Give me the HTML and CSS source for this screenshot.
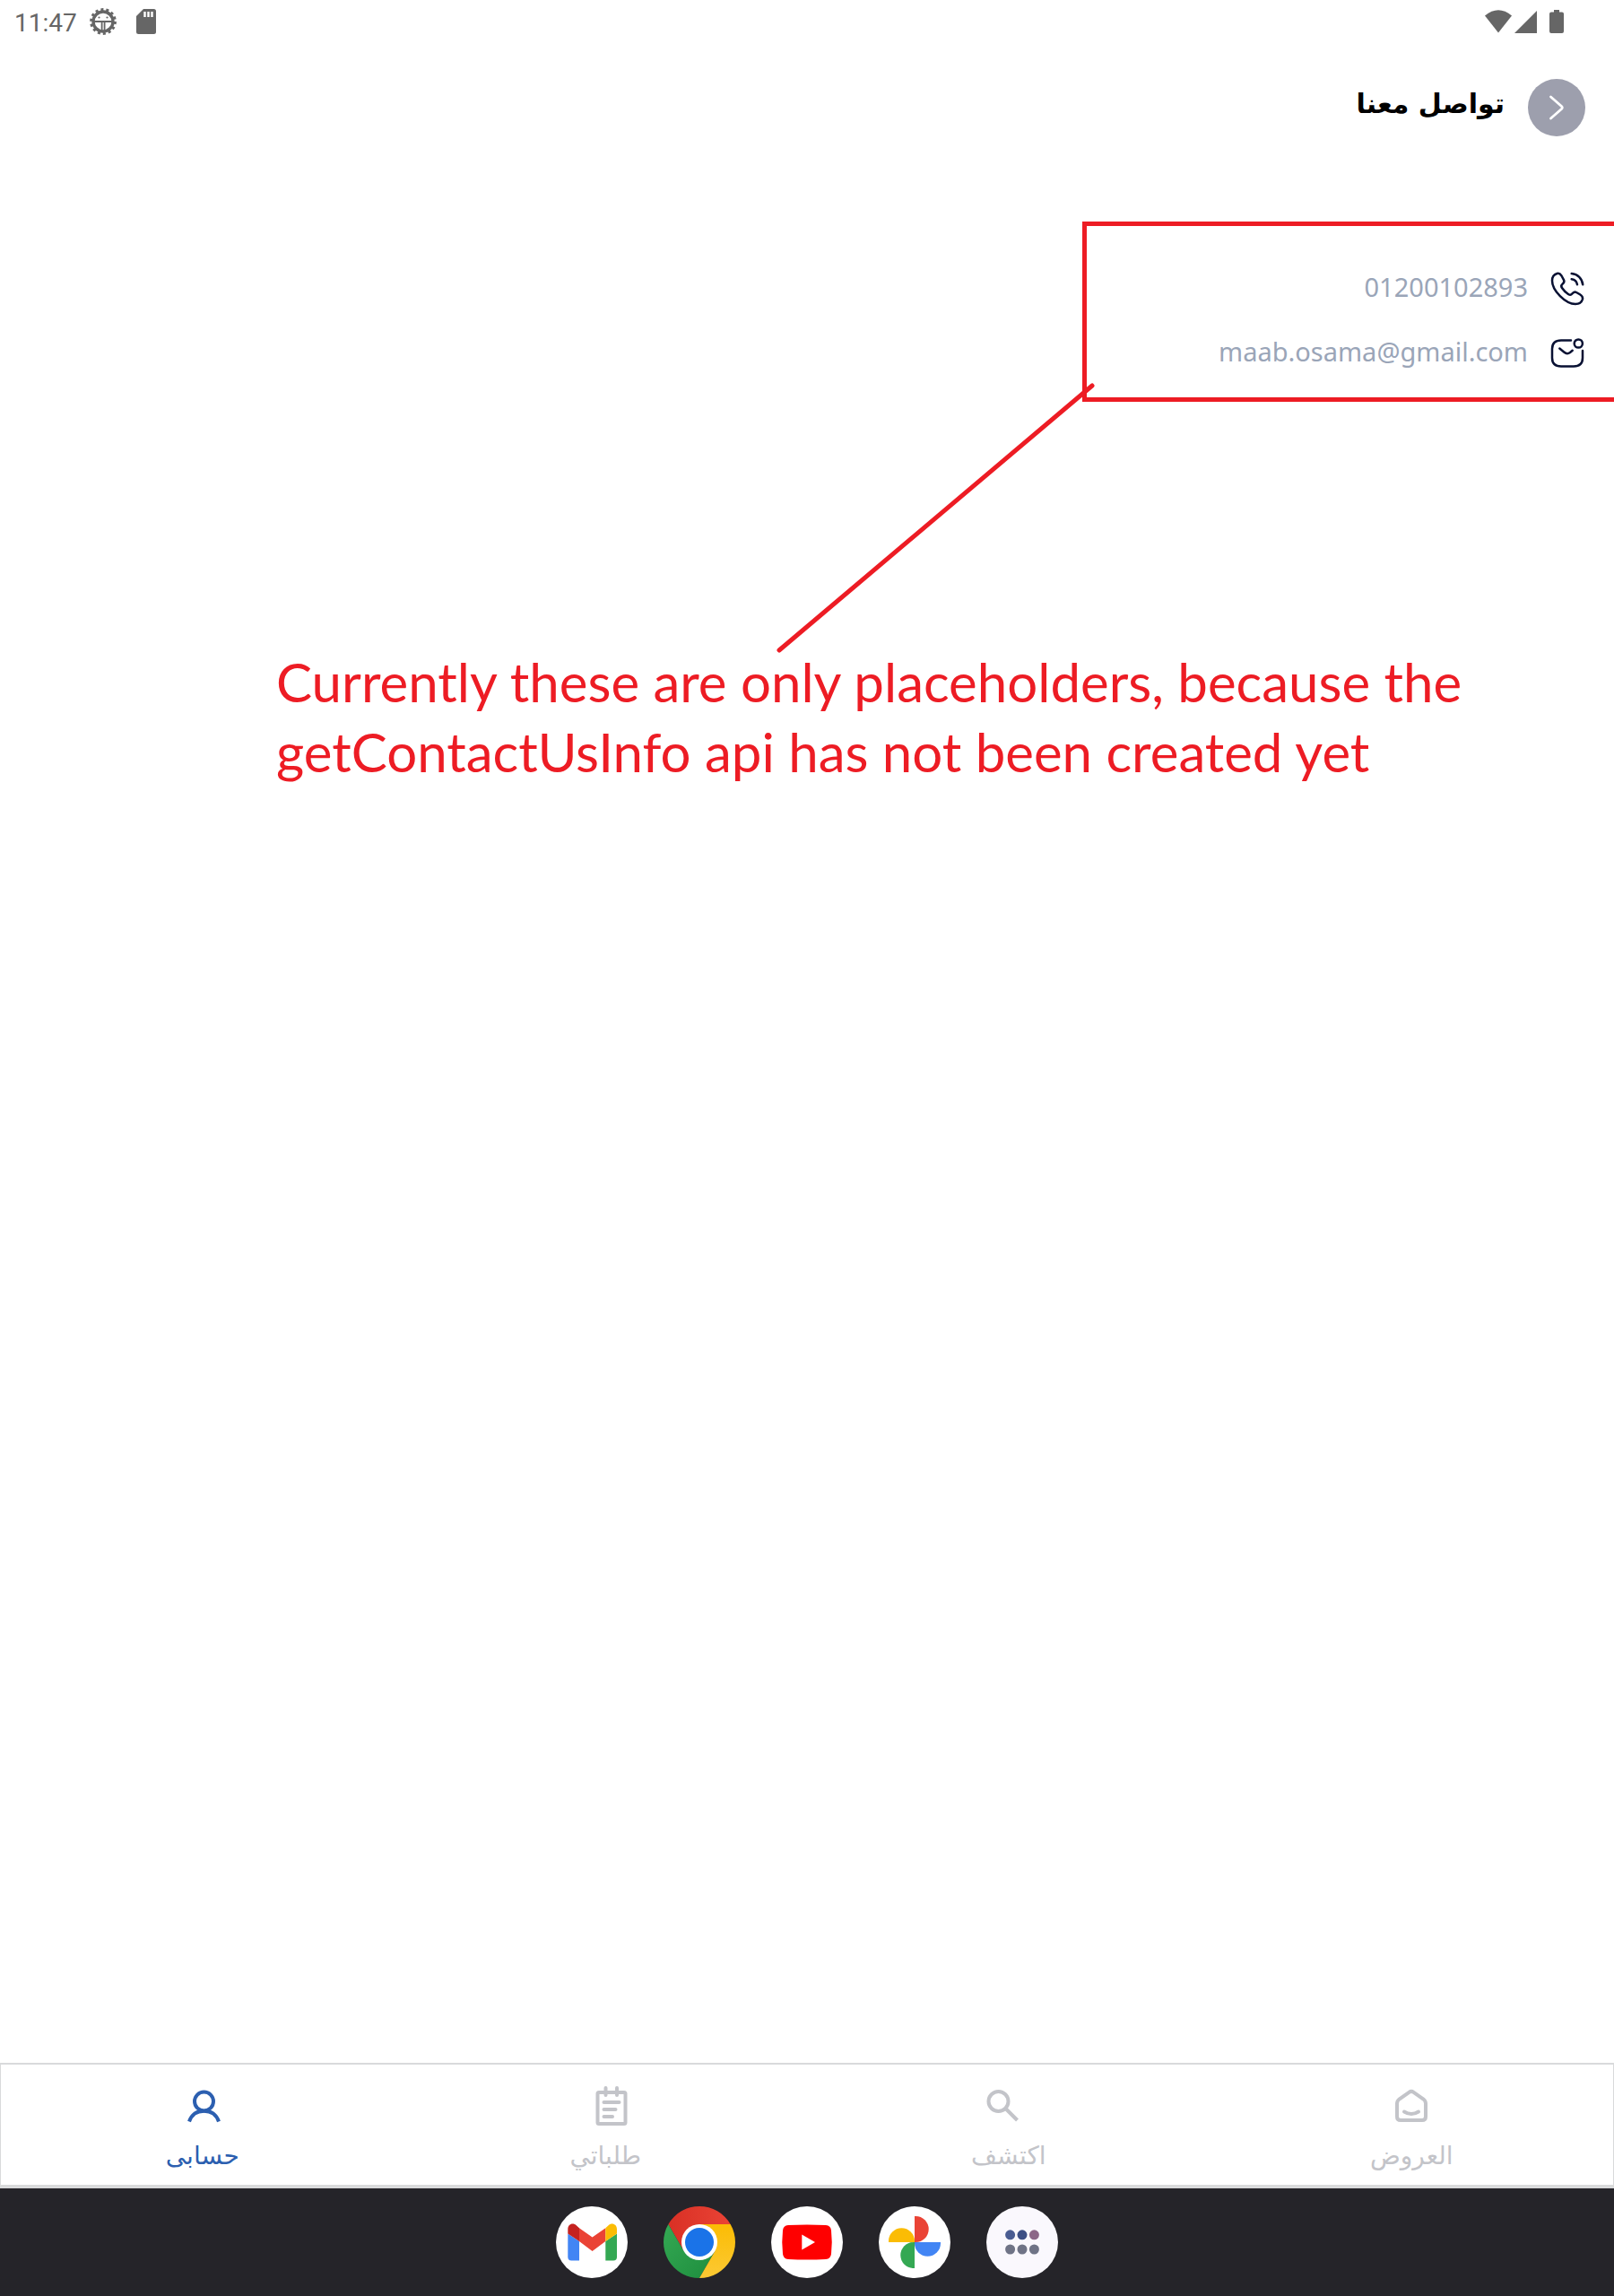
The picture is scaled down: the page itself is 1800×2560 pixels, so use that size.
FILE: index.html
```html
<!DOCTYPE html>
<html lang="ar" dir="rtl">
<head>
<meta charset="utf-8">
<meta name="viewport" content="width=device-width, initial-scale=1">
<title>تواصل معنا</title>
<link rel="stylesheet" href="styles.css">
</head>
<body>
<div class="status" dir="ltr">
  <div class="status-group">
    <time class="clock">11:47</time>
    <svg class="gear" width="30" height="30" viewBox="0 0 30 30" aria-hidden="true">
      <circle cx="15" cy="15" r="11" fill="none" stroke="#666" stroke-width="3.400"/>
      <circle cx="15" cy="15" r="13.200" fill="none" stroke="#666" stroke-width="3.400" stroke-dasharray="3 2.920"/>
      <path d="M4 15h22" stroke="#666" stroke-width="2"/>
      <path d="M13.600 15v10M16.600 15v10" stroke="#666" stroke-width="1.800"/>
      <circle cx="10.500" cy="10.500" r="1.100" fill="#666"/><circle cx="19.500" cy="10.500" r="1.100" fill="#666"/>
    </svg>
    <svg width="22" height="28" viewBox="0 0 22 28" aria-hidden="true">
      <path d="M8 0H19.500Q22 0 22 2.500V25.500Q22 28 19.500 28H2.500Q0 28 0 25.500V8Z" fill="#666"/>
      <path d="M9.500 3v6M13.500 3v6M17.500 3v6" stroke="#fff" stroke-width="2.400"/>
    </svg>
  </div>
  <div class="status-group status-signals">
    <svg width="30" height="26" viewBox="0 0 30 26" aria-hidden="true"><path d="M0 6.500Q15-6 30 6.500L15 25.500Z" fill="#666"/></svg>
    <svg width="25" height="26" viewBox="0 0 25 26" aria-hidden="true"><path d="M25 1V26H0Z" fill="#666"/></svg>
    <svg class="battery" width="16" height="26" viewBox="0 0 16 26" aria-hidden="true"><path d="M5 0h6v2.500h3q2 0 2 2V24q0 2-2 2H2q-2 0-2-2V4.500q0-2 2-2h3z" fill="#666"/></svg>
  </div>
</div>

<header class="header">
  <button class="back" type="button" aria-label="رجوع">
    <svg width="64" height="64" viewBox="0 0 64 64" aria-hidden="true"><path d="M25.500 20L37.500 30.500Q39 32 37.500 33.500L25.500 44" fill="none" stroke="#fff" stroke-width="2.800" stroke-linecap="round"/></svg>
  </button>
  <h1 class="title">تواصل معنا</h1>
</header>

<main class="main">
  <section class="contact">
    <a class="contact-row" href="tel:01200102893">
      <svg class="contact-icon" viewBox="0 0 40 40" aria-hidden="true">
        <path d="M8.500 3C5 4 3 7 3 11C3 22 18 37 29 37C33 37 36 35 37 31.500C37.500 29 36 27.500 34 26.300L30 24C27.500 22.700 26.500 24 25.300 25.600C24 27.300 22.500 27 21 26C18 24 16 22 14 19C13 17.500 12.800 16.200 14.400 14.900C16 13.600 17.300 12.600 16 10.200L13.500 5.500C12.200 3.500 11 2.300 8.500 3Z"/>
        <path d="M24.700 3C31.500 3.500 36.500 8.500 37.200 15.300M24.700 9.200C28 9.700 30.500 12 31 15.300"/>
      </svg>
      <span dir="ltr">01200102893</span>
    </a>
    <a class="contact-row" href="mailto:maab.osama@gmail.com">
      <svg class="contact-icon" viewBox="0 0 40 40" aria-hidden="true">
        <path d="M24 5.500H13Q3 5.500 3 15V25Q3 34.500 13 34.500H27Q37 34.500 37 25V17"/>
        <circle cx="32.300" cy="9" r="4.600"/>
        <path d="M11.300 14.500L16.500 18.700Q19.700 21.500 23 19L25.700 16.800"/>
      </svg>
      <span dir="ltr">maab.osama@gmail.com</span>
    </a>
    <svg class="pointer" width="360" height="304" viewBox="0 0 360 304" aria-hidden="true"><path d="M355 4L6 299" stroke="#ed1c24" stroke-width="5" stroke-linecap="round"/></svg>
  </section>
  <p class="note" dir="ltr" lang="en">Currently these are only placeholders, because the<br>getContactUsInfo api has not been created yet</p>
</main>

<nav class="tabs">
  <a class="tab" href="#offers">
    <svg class="tab-icon" viewBox="0 0 56 48" aria-hidden="true">
      <path d="M25.500 8.800L14.500 16.500Q12 18.500 12 21.500V36Q12 40 16 40H40Q44 40 44 36V21.500Q44 18.500 41.500 16.500L30.500 8.800Q28 7 25.500 8.800Z"/>
      <path d="M20 30.500Q28 35.500 36 30.500" stroke-linecap="round"/>
    </svg>
    <span>العروض</span>
  </a>
  <a class="tab" href="#explore">
    <svg class="tab-icon" viewBox="0 0 56 48" aria-hidden="true"><circle cx="16.500" cy="19" r="11"/><path d="M24.500 27L37.500 40"/></svg>
    <span>اكتشف</span>
  </a>
  <a class="tab" href="#orders">
    <svg class="tab-icon" viewBox="0 0 56 48" aria-hidden="true">
      <rect x="19.500" y="9" width="31" height="35" rx="1.500"/>
      <path d="M28.500 4v8M41 4v8M26.500 20H43.500M26.500 28H39.500M26.500 36H36" stroke-linecap="round"/>
    </svg>
    <span>طلباتي</span>
  </a>
  <a class="tab tab-active" href="#account" aria-current="page">
    <svg class="tab-icon" viewBox="0 0 56 48" aria-hidden="true"><circle cx="29.500" cy="19" r="10.500"/><path d="M13 41.500C15.500 34 21.500 29.700 29.500 29.700S43.500 34 46 41.500"/></svg>
    <span>حسابى</span>
  </a>
</nav>

<footer class="dock" dir="ltr">
  <button class="app" type="button" aria-label="Gmail">
    <svg viewBox="0 0 80 80" aria-hidden="true">
      <circle cx="40" cy="40" r="40" fill="#fff"/>
      <path d="M13.300 30.500L26 39V60.500H17.300Q13.300 60.500 13.300 56.500Z" fill="#4285f4"/>
      <path d="M55.300 39L68 30.500V56.500Q68 60.500 64 60.500H55.300Z" fill="#34a853"/>
      <path d="M26 24.300L40.600 34.500L55.300 24.300V39L40.600 50L26 39Z" fill="#ea4335"/>
      <path d="M13.300 30.500V25.500C13.300 20 19 17.500 23 21.500L26 24.300V39Z" fill="#c5221f"/>
      <path d="M68 30.500V25.500C68 20 62.300 17.500 58.300 21.500L55.300 24.300V39Z" fill="#fbbc04"/>
    </svg>
  </button>
  <button class="app" type="button" aria-label="Chrome">
    <svg viewBox="0 0 80 80" aria-hidden="true">
      <defs>
        <linearGradient id="cr"><stop stop-color="#d93025"/><stop offset="1" stop-color="#ea4335"/></linearGradient>
        <linearGradient id="cg" x1="1" y1="1" x2="0" y2="0"><stop stop-color="#1e8e3e"/><stop offset="1" stop-color="#34a853"/></linearGradient>
        <linearGradient id="cy" x1="0" y1="1" x2="0" y2="0"><stop stop-color="#fcc934"/><stop offset="1" stop-color="#fbbc04"/></linearGradient>
      </defs>
      <path d="M40 40L22.700 50L5.360 20A40 40 0 0 1 74.640 20H40Z" fill="url(#cr)"/>
      <path d="M40 40L57.300 50L40 80A40 40 0 0 1 5.360 20L22.700 50Z" fill="url(#cg)"/>
      <path d="M40 40V20H74.640A40 40 0 0 1 40 80L57.300 50Z" fill="url(#cy)"/>
      <circle cx="40" cy="40" r="20" fill="#fff"/><circle cx="40" cy="40" r="16" fill="#1a73e8"/>
    </svg>
  </button>
  <button class="app" type="button" aria-label="YouTube">
    <svg viewBox="0 0 80 80" aria-hidden="true">
      <circle cx="40" cy="40" r="40" fill="#fff"/>
      <path d="M19 21Q40 20 61 21Q66.500 21.500 67 27Q68.500 40 67 53Q66.500 58.500 61 59Q40 60 19 59Q13.500 58.500 13 53Q11.500 40 13 27Q13.500 21.500 19 21Z" fill="#f00"/>
      <path d="M34.300 31.600L49 40L34.300 48.400Z" fill="#fff"/>
    </svg>
  </button>
  <button class="app" type="button" aria-label="Photos">
    <svg viewBox="0 0 80 80" aria-hidden="true">
      <circle cx="40" cy="40" r="40" fill="#fff"/>
      <path d="M40 40H11V38.800A14.500 14.500 0 0 1 40 38.800Z" fill="#fbbc04"/>
      <path d="M40 40V11H41.200A14.500 14.500 0 0 1 41.200 40Z" fill="#ea4335"/>
      <path d="M40 40H69V41.200A14.500 14.500 0 0 1 40 41.200Z" fill="#4285f4"/>
      <path d="M40 40V69H38.800A14.500 14.500 0 0 1 38.800 40Z" fill="#34a853"/>
    </svg>
  </button>
  <button class="app" type="button" aria-label="Apps">
    <svg viewBox="0 0 80 80" aria-hidden="true">
      <circle cx="40" cy="40" r="40" fill="#faf8fd"/>
      <circle cx="26.600" cy="31.800" r="5.500" fill="#4a5c92"/><circle cx="40" cy="31.800" r="5.500" fill="#3d4f85"/><circle cx="53.400" cy="31.800" r="5.500" fill="#8c6787"/>
      <g fill="#6f7386"><circle cx="26.600" cy="48" r="5.500"/><circle cx="40" cy="48" r="5.500"/><circle cx="53.400" cy="48" r="5.500"/></g>
    </svg>
  </button>
</footer>
</body>
</html>
```
FILE: styles.css
```css
* { box-sizing: border-box; }

body {
  margin: 0;
  min-height: 100vh;
  display: flex;
  flex-direction: column;
  overflow-x: hidden;
  background: #fff;
  font-family: "Noto Sans", "DejaVu Sans", sans-serif;
}

svg { display: block; }
a { color: inherit; text-decoration: none; }

button {
  padding: 0;
  border: 0;
  background: none;
  cursor: pointer;
}

.status {
  display: flex;
  justify-content: space-between;
  align-items: center;
  height: 48px;
  padding: 0 56px 0 16px;
  color: #666;
}

.status-group {
  display: flex;
  align-items: center;
  gap: 22px;
}

.status-signals { gap: 3px; }
.gear { margin-left: -8px; }
.battery { margin-left: 11px; }

.clock {
  padding-top: 3px;
  font-family: Roboto, sans-serif;
  font-size: 28px;
  line-height: 45px;
}

.header {
  display: flex;
  align-items: flex-start;
  gap: 26px;
  padding: 40px 32px 0;
}

.back {
  width: 64px;
  height: 64px;
  border-radius: 50%;
  background: #9d9fad;
}

.title {
  margin: 0;
  font-family: "DejaVu Sans", sans-serif;
  font-size: 30px;
  font-weight: 700;
  line-height: 56px;
  color: #000;
}

.main {
  flex: 1;
  padding-top: 95px;
}

.contact {
  position: relative;
  display: flex;
  flex-direction: column;
  align-items: flex-start;
  gap: 32px;
  width: 593px;
  max-width: 100%;
  padding: 50px 32px 29px;
  border: 5px solid #ed1c24;
  border-right: 0;
}

.contact-row {
  display: flex;
  align-items: flex-start;
  gap: 24px;
  font-size: 29px;
  line-height: 36px;
  color: #9aa5b8;
}

.contact-icon {
  width: 40px;
  height: 40px;
  fill: none;
  stroke: #091133;
  stroke-width: 2.5;
  stroke-linecap: round;
  stroke-linejoin: round;
}

.pointer {
  position: absolute;
  top: 174px;
  right: 577px;
}

.note {
  margin: 273px 0 0;
  padding: 0 160px 0 308px;
  font-family: Lato, sans-serif;
  font-size: 60px;
  line-height: 78px;
  color: #ed1c24;
}

.tabs {
  display: grid;
  grid-template-columns: repeat(4, 1fr);
  height: 140px;
  border: 1px solid #d9dadb;
  border-width: 2px 1px 4px;
}

.tab {
  display: flex;
  flex-direction: column;
  align-items: center;
  gap: 14px;
  padding-top: 22px;
  font-family: "DejaVu Sans", sans-serif;
  font-size: 28px;
  line-height: 36px;
  color: #c3c4c9;
}

.tab-active { color: #2c5fb0; }

.tab-icon {
  width: 56px;
  height: 48px;
  overflow: visible;
  fill: none;
  stroke: currentColor;
  stroke-width: 4;
}

.dock {
  display: flex;
  justify-content: center;
  align-items: center;
  gap: 40px;
  height: 120px;
  background: #252429;
}

.app {
  width: 80px;
  height: 80px;
  border-radius: 50%;
}
```
